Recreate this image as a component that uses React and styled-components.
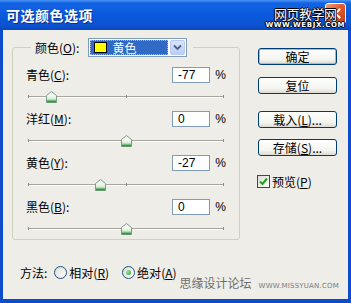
import React from 'react';
import styled, { createGlobalStyle } from 'styled-components';

const GlobalStyle = createGlobalStyle`
  html, body {
    margin: 0;
    padding: 0;
    width: 351px;
    height: 303px;
    overflow: hidden;
    background: #ffffff;
  }
`;

const cjk = `"Noto Sans CJK SC", "Liberation Sans", sans-serif`;

const Window = styled.div`
  width: 351px;
  height: 303px;
  display: flex;
  flex-direction: column;
  background: #0c4ccb;
  font-family: ${cjk};
  font-size: 12px;
  color: #000;
`;

const TitleBar = styled.div`
  position: relative;
  height: 30px;
  flex: none;
  display: flex;
  align-items: center;
  padding-left: 6px;
  background: linear-gradient(#4a95f6 0, #1364e4 3px, #0a59dc 50%, #0b52d0 85%, #0a47bd 100%);
`;

const Title = styled.div`
  color: #fff;
  font-weight: bold;
  font-size: 14px;
  letter-spacing: 0.5px;
  text-shadow: 1px 1px 0 #0a2f8a;
`;

const CloseButton = styled.div`
  position: absolute;
  right: 5px;
  top: 3px;
  width: 19px;
  height: 19px;
  border: 1px solid #fff;
  border-radius: 3px;
  background: linear-gradient(135deg, #f29c7e 0%, #e45a2e 45%, #c2401a 100%);
  display: flex;
  align-items: center;
  justify-content: center;
`;

const Watermark = styled.div`
  position: absolute;
  right: 6px;
  top: 7px;
  display: flex;
  flex-direction: column;
  align-items: center;
  line-height: 1;
  pointer-events: none;
`;

const WatermarkBig = styled.div`
  font-family: ${cjk};
  font-size: 13px;
  color: #fff;
  letter-spacing: -0.5px;
  text-shadow: -1px 0 0 #000, 1px 0 0 #000, 0 -1px 0 #000, 0 1px 0 #000;
`;

const WatermarkSmall = styled.div`
  margin-top: 2px;
  font-family: "DejaVu Sans", sans-serif;
  font-weight: bold;
  font-size: 7px;
  letter-spacing: 0.6px;
  color: #fff;
  text-shadow: -1px 0 0 #000, 1px 0 0 #000, 0 -1px 0 #000, 0 1px 0 #000;
`;

const Body = styled.div`
  position: relative;
  flex: 1;
  margin: 0 3px 4px 3px;
  background: #eeede8;
  display: flex;
`;

const LeftColumn = styled.div`
  display: flex;
  flex-direction: column;
  margin-left: 9px;
  width: 228px;
`;

const GroupBox = styled.fieldset`
  box-sizing: border-box;
  width: 228px;
  margin: 8px 0 0 0;
  padding: 10px 13px 3px 13px;
  border: 1px solid #d0d0bf;
  border-radius: 3px;
  min-inline-size: 0;
`;

const Legend = styled.legend`
  display: flex;
  align-items: center;
  margin-left: 5px;
  padding: 0 6px 0 4px;
  height: 19px;
`;

const LegendLabel = styled.span`
  margin-right: 9px;
`;

const Select = styled.div`
  box-sizing: border-box;
  width: 99px;
  height: 19px;
  border: 1px solid #7f9db9;
  background: #fff;
  display: flex;
  align-items: center;
  padding: 1px;
`;

const SelectValue = styled.div`
  box-sizing: border-box;
  flex: 1;
  height: 15px;
  margin-right: 2px;
  background: #316ac5;
  outline: 1px dotted #a0b8e8;
  outline-offset: -1px;
  display: flex;
  align-items: center;
  padding-left: 4px;
  color: #fff;
`;

const Swatch = styled.span`
  box-sizing: border-box;
  width: 13px;
  height: 11px;
  background: ${({ color }) => color};
  border: 1px solid #000;
  margin-right: 5px;
`;

const SelectArrow = styled.div`
  box-sizing: border-box;
  width: 15px;
  height: 15px;
  background: linear-gradient(#d9e5fd, #b9cef7);
  border: 1px solid #b7cbf3;
  border-radius: 2px;
  display: flex;
  align-items: center;
  justify-content: center;
`;

const Row = styled.div`
  padding-bottom: 7px;
  &:last-child {
    padding-bottom: 0;
  }
`;

const RowHeader = styled.div`
  display: flex;
  align-items: center;
  height: 15px;
`;

const RowLabel = styled.span`
  width: 146px;
  flex: none;
`;

const NumberBox = styled.div`
  box-sizing: border-box;
  width: 40px;
  height: 16px;
  border: 1px solid #7f9db9;
  background: #fff;
  padding-left: 5px;
  font-family: "Liberation Sans", sans-serif;
  font-size: 12px;
  line-height: 14px;
`;

const Percent = styled.span`
  margin-left: 5px;
  font-family: "Liberation Sans", sans-serif;
  font-size: 12px;
`;

const Slider = styled.div`
  position: relative;
  margin: 9px 0 0 2px;
  width: 196px;
  height: 13px;
`;

const Track = styled.div`
  position: absolute;
  left: 0;
  right: 0;
  top: 5px;
  height: 1px;
  background: #a8a79d;
  border-bottom: 1px solid #fff;
`;

const Tick = styled.div`
  position: absolute;
  top: 4px;
  width: 1px;
  height: 3px;
  background: #8e8d85;
`;

const Thumb = styled.svg`
  position: absolute;
  top: 0;
  width: 11px;
  height: 12px;
`;

const MethodRow = styled.div`
  display: flex;
  align-items: center;
  margin: 24px 0 0 8px;
  height: 16px;
`;

const Radio = styled.span`
  box-sizing: border-box;
  width: 13px;
  height: 13px;
  border-radius: 50%;
  border: 1px solid #1c5180;
  background: linear-gradient(135deg, #dcdcd6, #ffffff);
  display: inline-flex;
  align-items: center;
  justify-content: center;
  margin: 0 2px 0 ${({ gap }) => gap}px;
`;

const RadioDot = styled.span`
  width: 5px;
  height: 5px;
  border-radius: 50%;
  background: radial-gradient(circle at 35% 35%, #a4e5a0, #21a121);
`;

const BottomMark = styled.div`
  position: absolute;
  right: 9px;
  bottom: 8px;
  display: flex;
  align-items: baseline;
  pointer-events: none;
`;

const BottomMarkCn = styled.span`
  font-size: 12px;
  color: #6e6e6e;
  margin-right: 7px;
`;

const BottomMarkEn = styled.span`
  font-family: "DejaVu Sans", sans-serif;
  font-size: 7px;
  letter-spacing: 0.2px;
  color: #7a7a7a;
`;

const RightColumn = styled.div`
  display: flex;
  flex-direction: column;
  margin-left: 18px;
  padding-top: 18px;
`;

const Button = styled.div`
  box-sizing: border-box;
  width: 79px;
  height: 17px;
  margin-top: ${({ gap }) => gap}px;
  border: 1px solid #003c74;
  border-radius: 3px;
  background: linear-gradient(#ffffff, #f4f4f0 70%, #dcdad2);
  box-shadow: ${({ primary }) => (primary ? 'inset 0 0 0 1px #9cb8ee' : 'none')};
  display: flex;
  align-items: center;
  justify-content: center;
  line-height: 1;
`;

const CheckRow = styled.div`
  display: flex;
  align-items: center;
  margin-top: 17px;
  margin-left: -1px;
`;

const CheckBox = styled.span`
  box-sizing: border-box;
  width: 13px;
  height: 13px;
  border: 1px solid #1c5180;
  background: linear-gradient(135deg, #dcdcd6, #ffffff);
  display: inline-flex;
  align-items: center;
  justify-content: center;
  margin-right: 2px;
`;

const U = styled.span`
  text-decoration: underline;
`;

const Key = ({ k }) => (
  <>
    (<U>{k}</U>)
  </>
);

const rows = [
  { name: '青色', key: 'C', value: -77 },
  { name: '洋红', key: 'M', value: 0 },
  { name: '黄色', key: 'Y', value: -27 },
  { name: '黑色', key: 'B', value: 0 },
];

const SliderThumb = ({ value }) => (
  <Thumb style={{ left: ((value + 100) / 200) * 196 - 5 }} viewBox="0 0 11 12">
    <defs>
      <linearGradient id="thumbg" x1="0" y1="0" x2="0" y2="1">
        <stop offset="0" stopColor="#ffffff" />
        <stop offset="0.6" stopColor="#eaf3e6" />
        <stop offset="1" stopColor="#3fae3f" />
      </linearGradient>
    </defs>
    <path d="M5.5 0.5 L10.5 4.5 L10.5 11.5 L0.5 11.5 L0.5 4.5 Z" fill="url(#thumbg)" stroke="#7c9a8a" strokeWidth="1" />
    <path d="M1 10.5 H10" stroke="#2f9a3a" strokeWidth="1.5" />
  </Thumb>
);

export default function App() {
  return (
    <>
      <GlobalStyle />
      <Window>
        <TitleBar>
          <Title>可选颜色选项</Title>
          <CloseButton>
            <svg width="11" height="11" viewBox="0 0 11 11">
              <path d="M1.5 1.5 L9.5 9.5 M9.5 1.5 L1.5 9.5" stroke="#fff" strokeWidth="2" strokeLinecap="square" />
            </svg>
          </CloseButton>
          <Watermark>
            <WatermarkBig>网页教学网</WatermarkBig>
            <WatermarkSmall>WWW.WEBJX.COM</WatermarkSmall>
          </Watermark>
        </TitleBar>
        <Body>
          <LeftColumn>
            <GroupBox>
              <Legend>
                <LegendLabel>
                  颜色<Key k="O" />:
                </LegendLabel>
                <Select>
                  <SelectValue>
                    <Swatch color="#ffff00" />
                    黄色
                  </SelectValue>
                  <SelectArrow>
                    <svg width="9" height="7" viewBox="0 0 9 7">
                      <path d="M1 1.5 L4.5 5 L8 1.5" fill="none" stroke="#4d6185" strokeWidth="1.8" />
                    </svg>
                  </SelectArrow>
                </Select>
              </Legend>
              {rows.map((r) => (
                <Row key={r.key}>
                  <RowHeader>
                    <RowLabel>
                      {r.name}
                      <Key k={r.key} />:
                    </RowLabel>
                    <NumberBox>{r.value}</NumberBox>
                    <Percent>%</Percent>
                  </RowHeader>
                  <Slider>
                    <Track />
                    <Tick style={{ left: 0 }} />
                    <Tick style={{ left: 98 }} />
                    <Tick style={{ left: 195 }} />
                    <SliderThumb value={r.value} />
                  </Slider>
                </Row>
              ))}
            </GroupBox>
            <MethodRow>
              <span>方法:</span>
              <Radio gap={7} />
              <span>
                相对<Key k="R" />
              </span>
              <Radio gap={13}>
                <RadioDot />
              </Radio>
              <span>
                绝对<Key k="A" />
              </span>
            </MethodRow>
          </LeftColumn>
          <RightColumn>
            <Button primary gap={0}>确定</Button>
            <Button gap={12}>复位</Button>
            <Button gap={17}>
              载入<Key k="L" />...
            </Button>
            <Button gap={11}>
              存储<Key k="S" />...
            </Button>
            <CheckRow>
              <CheckBox>
                <svg width="9" height="9" viewBox="0 0 9 9">
                  <path d="M1 4.5 L3.5 7 L8 1.5" fill="none" stroke="#21a121" strokeWidth="2" />
                </svg>
              </CheckBox>
              <span>
                预览<Key k="P" />
              </span>
            </CheckRow>
          </RightColumn>
          <BottomMark>
            <BottomMarkCn>思缘设计论坛</BottomMarkCn>
            <BottomMarkEn>WWW.MISSYUAN.COM</BottomMarkEn>
          </BottomMark>
        </Body>
      </Window>
    </>
  );
}
